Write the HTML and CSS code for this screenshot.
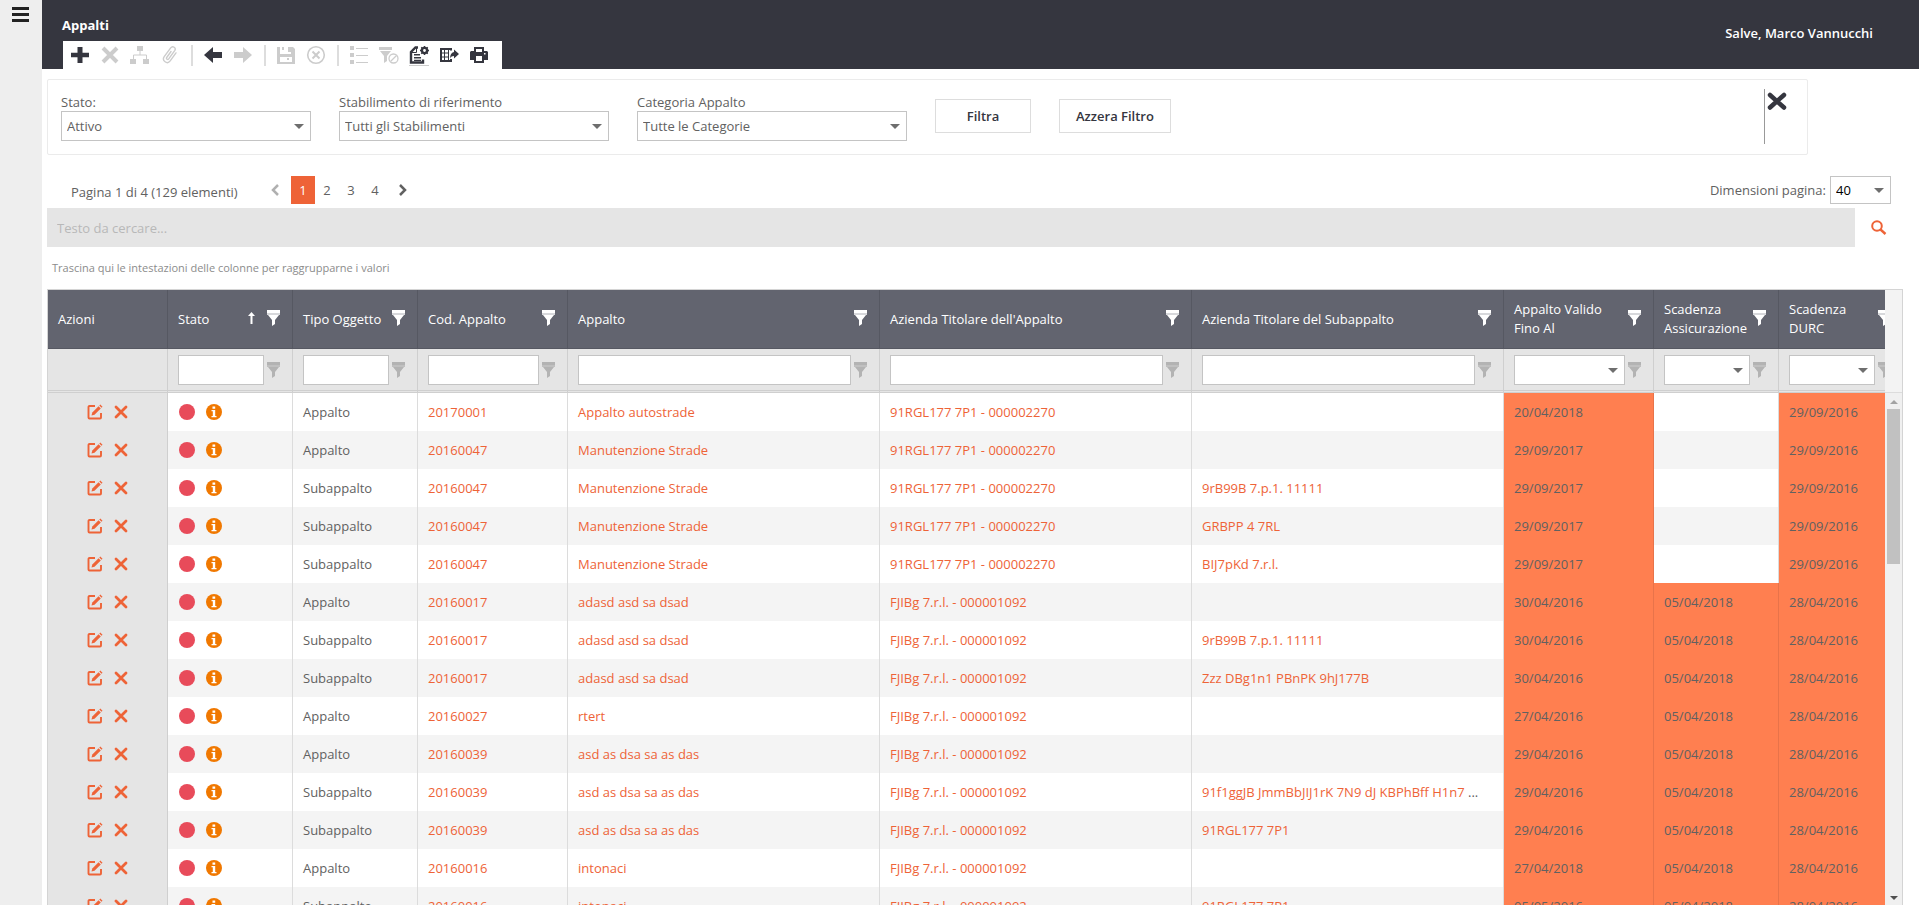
FILE: index.html
```html
<!DOCTYPE html>
<html lang="it">
<head>
    <meta charset="UTF-8">
    <meta name="viewport" content="width=device-width, initial-scale=1.0">
    <title>Appalti</title>
    <link rel="stylesheet" href="styles.css">
</head>
<body>
    <!-- Icon definitions -->
    <svg class="icon-defs" aria-hidden="true">
        <symbol id="funnel" viewBox="0 0 13 16">
            <path d="M0 0h13v3H0z"/>
            <path d="M0 3h13v2H0z" opacity=".75"/>
            <path d="M1 5h11L8 10v4l-3 2v-6z"/>
        </symbol>
        <symbol id="edit" viewBox="0 0 16 16">
            <path d="M8 2H2.500a1 1 0 0 0-1 1v10.500a1 1 0 0 0 1 1H13a1 1 0 0 0 1-1V9" fill="none" stroke="currentColor" stroke-width="1.900"/>
            <path d="M4.500 11.500l.8-3L11.600 2.200l2.200 2.200L7.500 10.700z"/>
            <path d="M12.300 1.500l1-1 2.200 2.200-1 1z"/>
        </symbol>
        <symbol id="cross" viewBox="0 0 14 14">
            <path d="M2 2l10 10M12 2L2 12" fill="none" stroke="currentColor" stroke-width="2.800" stroke-linecap="round"/>
        </symbol>
        <symbol id="info" viewBox="0 0 16 16">
            <circle cx="8" cy="8" r="8"/>
            <path d="M6.500 2.500h2.700v2.200H6.500zM5.500 6h3.700v6h1.300v1.200h-5V12h1.300V7.200H5.500z" fill="#fff"/>
        </symbol>
    </svg>

    <div class="app">
        <aside class="sidebar">
            <button class="menu-button" aria-label="Menu"><svg width="17" height="15" viewBox="0 0 17 15"><path d="M0 0h17v3H0zM0 6h17v3H0zM0 12h17v3H0z"/></svg></button>
        </aside>

        <div class="page">
            <header class="header">
                <div class="header-left">
                    <h1>Appalti</h1>
                    <div class="toolbar">
                        <button class="tool" aria-label="Nuovo"><svg viewBox="0 0 20 20"><path d="M7.500 2h5v5.800H19v4.400h-6.500V18h-5v-5.800H1V7.800h6.500z"/></svg></button>
                        <button class="tool" aria-label="Elimina" disabled><svg viewBox="0 0 20 20"><path d="M3 3l14 14M17 3L3 17" fill="none" stroke="currentColor" stroke-width="4"/></svg></button>
                        <button class="tool" aria-label="Struttura" disabled><svg viewBox="0 0 20 20"><path d="M7 1h6v5H7zM0 14h6v5H0zM13 14h6v5h-6z"/><path d="M10 6v4M3.500 14v-4h13v4" fill="none" stroke="currentColor"/></svg></button>
                        <button class="tool" aria-label="Allegati" disabled><svg viewBox="0 0 20 20"><path d="M11 6.500l-4.300 6c-.9 1.400 1 2.700 2 1.400l6-8.300c1.800-2.700-2-5.400-4-2.700L4.200 11.700c-2.700 4 3 8.200 6 4.200l5.800-8" fill="none" stroke="currentColor" stroke-width="1.400" stroke-linecap="round"/></svg></button>
                        <span class="separator"></span>
                        <button class="tool" aria-label="Indietro"><svg viewBox="0 0 20 20"><path d="M1 10l9-8v5h9v6h-9v5z"/></svg></button>
                        <button class="tool" aria-label="Avanti" disabled><svg viewBox="0 0 20 20"><path d="M19 10l-9-8v5H1v6h9v5z"/></svg></button>
                        <span class="separator"></span>
                        <button class="tool" aria-label="Salva" disabled><svg viewBox="0 0 20 20"><path fill-rule="evenodd" d="M1 2h3v7h11V2h2l2 2v15H1zM4 12v5h12v-5z"/><path d="M6 2h2v3H6zM12 2h3v5h-3zM11 13h2v2h-2z"/></svg></button>
                        <button class="tool" aria-label="Annulla" disabled><svg viewBox="0 0 20 20"><path d="M6.500 6.500l7 7M13.500 6.500l-7 7" fill="none" stroke="currentColor" stroke-width="2"/><circle cx="10" cy="10" r="8.300" fill="none" stroke="currentColor" stroke-width="1.600"/></svg></button>
                        <span class="separator"></span>
                        <button class="tool" aria-label="Elenco" disabled><svg viewBox="0 0 20 20"><path d="M1 1h4v4H1zM1 8h4v4H1zM1 15h4v4H1zM7 3h12v1H7zM7 10h12v1H7zM7 17h12v1H7z"/></svg></button>
                        <button class="tool" aria-label="Rimuovi filtro" disabled><svg viewBox="0 0 20 20"><path d="M0 2h13v3H0zM1 6h11l-4 5v5l-3 2v-7z"/><circle cx="14.500" cy="13.500" r="6" fill="#fff"/><circle cx="14.500" cy="13.500" r="4.500" fill="none" stroke="currentColor" stroke-width="1.300"/><path d="M11.500 16.500l6-6" stroke="currentColor" stroke-width="1.300"/></svg></button>
                        <button class="tool focused" aria-label="Report"><svg viewBox="0 0 20 20"><path d="M9 2.500H6.500L2 7v10.500h12v-3" fill="none" stroke="currentColor" stroke-width="2.400"/><path d="M7.500 2v5.500H2" fill="none" stroke="currentColor"/><path d="M5 9h6v1.500H5zM5 12h7v1.500H5zM5 14.800h7V16H5z"/><circle cx="15.500" cy="5.500" r="2.600" fill="none" stroke="currentColor" stroke-width="2.400"/><path d="M15.500 1v2M15.500 8v2M11 5.500h2M18 5.500h2M12.300 2.300l1.400 1.400M17.300 7.300l1.400 1.400M18.700 2.300l-1.400 1.400M13.700 7.300l-1.400 1.400" stroke="currentColor" stroke-width="1.500"/></svg></button>
                        <button class="tool" aria-label="Esporta"><svg viewBox="0 0 20 20"><path d="M12 5.500V4H2v12h10v-2" fill="none" stroke="currentColor" stroke-width="2"/><path d="M5.500 4v12M9.500 4v12M2 8h8M2 12h8" stroke="currentColor"/><path d="M15 4.500l5 4.500-5 4.500V11c-2 0-3 .7-3.800 2.500-.2-3.500 1-6 3.800-6.500z"/></svg></button>
                        <button class="tool" aria-label="Stampa"><svg viewBox="0 0 20 20"><path fill-rule="evenodd" d="M5 2h10v4h3l1 1v8h-4v3H5v-3H1V7l1-1h3zM7 4v3h6V4zM7 11v5h6v-5zM15 8v1.500h1.500V8z"/></svg></button>
                    </div>
                </div>
                <div class="user">Salve, Marco Vannucchi</div>
            </header>

            <main class="content">
                <form class="filter-panel">
                    <div class="field field-small">
                        <label for="stato">Stato:</label>
                        <div class="select-box"><select id="stato"><option>Attivo</option></select></div>
                    </div>
                    <div class="field">
                        <label for="stabilimento">Stabilimento di riferimento</label>
                        <div class="select-box"><select id="stabilimento"><option>Tutti gli Stabilimenti</option></select></div>
                    </div>
                    <div class="field">
                        <label for="categoria">Categoria Appalto</label>
                        <div class="select-box"><select id="categoria"><option>Tutte le Categorie</option></select></div>
                    </div>
                    <button type="button" class="button">Filtra</button>
                    <button type="button" class="button">Azzera Filtro</button>
                    <div class="panel-close">
                        <button type="button" aria-label="Chiudi"><svg width="20" height="18" viewBox="0 0 20 18"><path d="M3 3l14 12.500M17 3L3 15.500" fill="none" stroke="currentColor" stroke-width="4.500" stroke-linecap="round"/></svg></button>
                    </div>
                </form>

                <div class="pager">
                    <span class="pager-summary">Pagina 1 di 4 (129 elementi)</span>
                    <nav class="pages" aria-label="Pagine">
                        <a class="page-prev" aria-label="Precedente"><svg width="8" height="12" viewBox="0 0 8 12"><path d="M7 1L2 6l5 5" fill="none" stroke="currentColor" stroke-width="2.500"/></svg></a>
                        <a class="current" href="#">1</a>
                        <a href="#">2</a>
                        <a href="#">3</a>
                        <a href="#">4</a>
                        <a class="page-next" href="#" aria-label="Successiva"><svg width="8" height="12" viewBox="0 0 8 12"><path d="M1 1l5 5-5 5" fill="none" stroke="currentColor" stroke-width="2.500"/></svg></a>
                    </nav>
                    <label class="size-label" for="pageSize">Dimensioni pagina:</label>
                    <div class="select-box size-box"><select id="pageSize"><option>40</option></select></div>
                </div>

                <div class="search">
                    <input type="text" placeholder="Testo da cercare..." aria-label="Testo da cercare">
                    <button aria-label="Cerca"><svg width="16" height="15" viewBox="0 0 16 15"><circle cx="6" cy="6" r="4.800" fill="none" stroke="currentColor" stroke-width="2"/><path d="M9.500 9.500l5 4.500" stroke="currentColor" stroke-width="2.400"/></svg></button>
                </div>

                <p class="group-hint">Trascina qui le intestazioni delle colonne per raggrupparne i valori</p>

                <div class="grid">
                    <div class="grid-view">
                        <table>
                            <colgroup>
                                <col class="w-actions"><col class="w-small"><col class="w-small"><col class="w-medium"><col><col><col><col class="w-medium"><col class="w-small"><col class="w-small">
                            </colgroup>
                            <thead>
                                <tr class="titles">
                                    <th>Azioni</th>
                                    <th><div class="head"><span>Stato</span><svg class="sort" width="7" height="12" viewBox="0 0 7 12"><path d="M3.500 0L7 4H4.500v8h-2V4H0z"/></svg><svg class="funnel"><use href="#funnel"/></svg></div></th>
                                    <th><div class="head"><span>Tipo Oggetto</span><svg class="funnel"><use href="#funnel"/></svg></div></th>
                                    <th><div class="head"><span>Cod. Appalto</span><svg class="funnel"><use href="#funnel"/></svg></div></th>
                                    <th><div class="head"><span>Appalto</span><svg class="funnel"><use href="#funnel"/></svg></div></th>
                                    <th><div class="head"><span>Azienda Titolare dell'Appalto</span><svg class="funnel"><use href="#funnel"/></svg></div></th>
                                    <th><div class="head"><span>Azienda Titolare del Subappalto</span><svg class="funnel"><use href="#funnel"/></svg></div></th>
                                    <th><div class="head"><span>Appalto Valido Fino Al</span><svg class="funnel"><use href="#funnel"/></svg></div></th>
                                    <th><div class="head"><span>Scadenza Assicurazione</span><svg class="funnel"><use href="#funnel"/></svg></div></th>
                                    <th><div class="head"><span>Scadenza<br>DURC</span><svg class="funnel"><use href="#funnel"/></svg></div></th>
                                </tr>
                                <tr class="filters">
                                    <td></td>
                                    <td><div class="head"><input type="text" aria-label="Filtra Stato"><svg class="funnel"><use href="#funnel"/></svg></div></td>
                                    <td><div class="head"><input type="text" aria-label="Filtra Tipo Oggetto"><svg class="funnel"><use href="#funnel"/></svg></div></td>
                                    <td><div class="head"><input type="text" aria-label="Filtra Cod. Appalto"><svg class="funnel"><use href="#funnel"/></svg></div></td>
                                    <td><div class="head"><input type="text" aria-label="Filtra Appalto"><svg class="funnel"><use href="#funnel"/></svg></div></td>
                                    <td><div class="head"><input type="text" aria-label="Filtra Azienda Titolare dell'Appalto"><svg class="funnel"><use href="#funnel"/></svg></div></td>
                                    <td><div class="head"><input type="text" aria-label="Filtra Azienda Titolare del Subappalto"><svg class="funnel"><use href="#funnel"/></svg></div></td>
                                    <td><div class="head"><div class="select-box"><select aria-label="Filtra Appalto Valido Fino Al"><option></option></select></div><svg class="funnel"><use href="#funnel"/></svg></div></td>
                                    <td><div class="head"><div class="select-box"><select aria-label="Filtra Scadenza Assicurazione"><option></option></select></div><svg class="funnel"><use href="#funnel"/></svg></div></td>
                                    <td><div class="head"><div class="select-box"><select aria-label="Filtra Scadenza DURC"><option></option></select></div><svg class="funnel"><use href="#funnel"/></svg></div></td>
                                </tr>
                            </thead>
                            <tbody>
                                <tr>
                                    <td class="actions"><button aria-label="Modifica"><svg class="edit"><use href="#edit"/></svg></button><button aria-label="Elimina"><svg class="cross"><use href="#cross"/></svg></button></td>
                                    <td class="status"><i class="dot"></i><svg class="info"><use href="#info"/></svg></td>
                                    <td>Appalto</td>
                                    <td><a href="#">20170001</a></td>
                                    <td><a href="#">Appalto autostrade</a></td>
                                    <td><a href="#">91RGL177 7P1 - 000002270</a></td>
                                    <td></td>
                                    <td class="expired">20/04/2018</td>
                                    <td></td>
                                    <td class="expired">29/09/2016</td>
                                </tr>
                                <tr>
                                    <td class="actions"><button aria-label="Modifica"><svg class="edit"><use href="#edit"/></svg></button><button aria-label="Elimina"><svg class="cross"><use href="#cross"/></svg></button></td>
                                    <td class="status"><i class="dot"></i><svg class="info"><use href="#info"/></svg></td>
                                    <td>Appalto</td>
                                    <td><a href="#">20160047</a></td>
                                    <td><a href="#">Manutenzione Strade</a></td>
                                    <td><a href="#">91RGL177 7P1 - 000002270</a></td>
                                    <td></td>
                                    <td class="expired">29/09/2017</td>
                                    <td></td>
                                    <td class="expired">29/09/2016</td>
                                </tr>
                                <tr>
                                    <td class="actions"><button aria-label="Modifica"><svg class="edit"><use href="#edit"/></svg></button><button aria-label="Elimina"><svg class="cross"><use href="#cross"/></svg></button></td>
                                    <td class="status"><i class="dot"></i><svg class="info"><use href="#info"/></svg></td>
                                    <td>Subappalto</td>
                                    <td><a href="#">20160047</a></td>
                                    <td><a href="#">Manutenzione Strade</a></td>
                                    <td><a href="#">91RGL177 7P1 - 000002270</a></td>
                                    <td><a href="#">9rB99B 7.p.1. 11111</a></td>
                                    <td class="expired">29/09/2017</td>
                                    <td></td>
                                    <td class="expired">29/09/2016</td>
                                </tr>
                                <tr>
                                    <td class="actions"><button aria-label="Modifica"><svg class="edit"><use href="#edit"/></svg></button><button aria-label="Elimina"><svg class="cross"><use href="#cross"/></svg></button></td>
                                    <td class="status"><i class="dot"></i><svg class="info"><use href="#info"/></svg></td>
                                    <td>Subappalto</td>
                                    <td><a href="#">20160047</a></td>
                                    <td><a href="#">Manutenzione Strade</a></td>
                                    <td><a href="#">91RGL177 7P1 - 000002270</a></td>
                                    <td><a href="#">GRBPP 4 7RL</a></td>
                                    <td class="expired">29/09/2017</td>
                                    <td></td>
                                    <td class="expired">29/09/2016</td>
                                </tr>
                                <tr>
                                    <td class="actions"><button aria-label="Modifica"><svg class="edit"><use href="#edit"/></svg></button><button aria-label="Elimina"><svg class="cross"><use href="#cross"/></svg></button></td>
                                    <td class="status"><i class="dot"></i><svg class="info"><use href="#info"/></svg></td>
                                    <td>Subappalto</td>
                                    <td><a href="#">20160047</a></td>
                                    <td><a href="#">Manutenzione Strade</a></td>
                                    <td><a href="#">91RGL177 7P1 - 000002270</a></td>
                                    <td><a href="#">BIJ7pKd 7.r.l.</a></td>
                                    <td class="expired">29/09/2017</td>
                                    <td></td>
                                    <td class="expired">29/09/2016</td>
                                </tr>
                                <tr>
                                    <td class="actions"><button aria-label="Modifica"><svg class="edit"><use href="#edit"/></svg></button><button aria-label="Elimina"><svg class="cross"><use href="#cross"/></svg></button></td>
                                    <td class="status"><i class="dot"></i><svg class="info"><use href="#info"/></svg></td>
                                    <td>Appalto</td>
                                    <td><a href="#">20160017</a></td>
                                    <td><a href="#">adasd asd sa dsad</a></td>
                                    <td><a href="#">FJIBg 7.r.l. - 000001092</a></td>
                                    <td></td>
                                    <td class="expired">30/04/2016</td>
                                    <td class="expired">05/04/2018</td>
                                    <td class="expired">28/04/2016</td>
                                </tr>
                                <tr>
                                    <td class="actions"><button aria-label="Modifica"><svg class="edit"><use href="#edit"/></svg></button><button aria-label="Elimina"><svg class="cross"><use href="#cross"/></svg></button></td>
                                    <td class="status"><i class="dot"></i><svg class="info"><use href="#info"/></svg></td>
                                    <td>Subappalto</td>
                                    <td><a href="#">20160017</a></td>
                                    <td><a href="#">adasd asd sa dsad</a></td>
                                    <td><a href="#">FJIBg 7.r.l. - 000001092</a></td>
                                    <td><a href="#">9rB99B 7.p.1. 11111</a></td>
                                    <td class="expired">30/04/2016</td>
                                    <td class="expired">05/04/2018</td>
                                    <td class="expired">28/04/2016</td>
                                </tr>
                                <tr>
                                    <td class="actions"><button aria-label="Modifica"><svg class="edit"><use href="#edit"/></svg></button><button aria-label="Elimina"><svg class="cross"><use href="#cross"/></svg></button></td>
                                    <td class="status"><i class="dot"></i><svg class="info"><use href="#info"/></svg></td>
                                    <td>Subappalto</td>
                                    <td><a href="#">20160017</a></td>
                                    <td><a href="#">adasd asd sa dsad</a></td>
                                    <td><a href="#">FJIBg 7.r.l. - 000001092</a></td>
                                    <td><a href="#">Zzz DBg1n1 PBnPK 9hJ177B</a></td>
                                    <td class="expired">30/04/2016</td>
                                    <td class="expired">05/04/2018</td>
                                    <td class="expired">28/04/2016</td>
                                </tr>
                                <tr>
                                    <td class="actions"><button aria-label="Modifica"><svg class="edit"><use href="#edit"/></svg></button><button aria-label="Elimina"><svg class="cross"><use href="#cross"/></svg></button></td>
                                    <td class="status"><i class="dot"></i><svg class="info"><use href="#info"/></svg></td>
                                    <td>Appalto</td>
                                    <td><a href="#">20160027</a></td>
                                    <td><a href="#">rtert</a></td>
                                    <td><a href="#">FJIBg 7.r.l. - 000001092</a></td>
                                    <td></td>
                                    <td class="expired">27/04/2016</td>
                                    <td class="expired">05/04/2018</td>
                                    <td class="expired">28/04/2016</td>
                                </tr>
                                <tr>
                                    <td class="actions"><button aria-label="Modifica"><svg class="edit"><use href="#edit"/></svg></button><button aria-label="Elimina"><svg class="cross"><use href="#cross"/></svg></button></td>
                                    <td class="status"><i class="dot"></i><svg class="info"><use href="#info"/></svg></td>
                                    <td>Appalto</td>
                                    <td><a href="#">20160039</a></td>
                                    <td><a href="#">asd as dsa sa as das</a></td>
                                    <td><a href="#">FJIBg 7.r.l. - 000001092</a></td>
                                    <td></td>
                                    <td class="expired">29/04/2016</td>
                                    <td class="expired">05/04/2018</td>
                                    <td class="expired">28/04/2016</td>
                                </tr>
                                <tr>
                                    <td class="actions"><button aria-label="Modifica"><svg class="edit"><use href="#edit"/></svg></button><button aria-label="Elimina"><svg class="cross"><use href="#cross"/></svg></button></td>
                                    <td class="status"><i class="dot"></i><svg class="info"><use href="#info"/></svg></td>
                                    <td>Subappalto</td>
                                    <td><a href="#">20160039</a></td>
                                    <td><a href="#">asd as dsa sa as das</a></td>
                                    <td><a href="#">FJIBg 7.r.l. - 000001092</a></td>
                                    <td><a href="#">91f1ggJB JmmBbJIJ1rK 7N9 dJ KBPhBff H1n7</a> ...</td>
                                    <td class="expired">29/04/2016</td>
                                    <td class="expired">05/04/2018</td>
                                    <td class="expired">28/04/2016</td>
                                </tr>
                                <tr>
                                    <td class="actions"><button aria-label="Modifica"><svg class="edit"><use href="#edit"/></svg></button><button aria-label="Elimina"><svg class="cross"><use href="#cross"/></svg></button></td>
                                    <td class="status"><i class="dot"></i><svg class="info"><use href="#info"/></svg></td>
                                    <td>Subappalto</td>
                                    <td><a href="#">20160039</a></td>
                                    <td><a href="#">asd as dsa sa as das</a></td>
                                    <td><a href="#">FJIBg 7.r.l. - 000001092</a></td>
                                    <td><a href="#">91RGL177 7P1</a></td>
                                    <td class="expired">29/04/2016</td>
                                    <td class="expired">05/04/2018</td>
                                    <td class="expired">28/04/2016</td>
                                </tr>
                                <tr>
                                    <td class="actions"><button aria-label="Modifica"><svg class="edit"><use href="#edit"/></svg></button><button aria-label="Elimina"><svg class="cross"><use href="#cross"/></svg></button></td>
                                    <td class="status"><i class="dot"></i><svg class="info"><use href="#info"/></svg></td>
                                    <td>Appalto</td>
                                    <td><a href="#">20160016</a></td>
                                    <td><a href="#">intonaci</a></td>
                                    <td><a href="#">FJIBg 7.r.l. - 000001092</a></td>
                                    <td></td>
                                    <td class="expired">27/04/2018</td>
                                    <td class="expired">05/04/2018</td>
                                    <td class="expired">28/04/2016</td>
                                </tr>
                                <tr>
                                    <td class="actions"><button aria-label="Modifica"><svg class="edit"><use href="#edit"/></svg></button><button aria-label="Elimina"><svg class="cross"><use href="#cross"/></svg></button></td>
                                    <td class="status"><i class="dot"></i><svg class="info"><use href="#info"/></svg></td>
                                    <td>Subappalto</td>
                                    <td><a href="#">20160016</a></td>
                                    <td><a href="#">intonaci</a></td>
                                    <td><a href="#">FJIBg 7.r.l. - 000001092</a></td>
                                    <td><a href="#">91RGL177 7P1</a></td>
                                    <td class="expired">05/05/2016</td>
                                    <td class="expired">05/04/2018</td>
                                    <td class="expired">28/04/2016</td>
                                </tr>
                            </tbody>
                        </table>
                    </div>
                    <div class="scrollbar" aria-hidden="true">
                        <div class="scroll-head"></div>
                        <div class="scroll-track">
                            <span class="arrow-up"></span>
                            <span class="thumb"></span>
                            <span class="arrow-down"></span>
                        </div>
                    </div>
                </div>
            </main>
        </div>
    </div>
</body>
</html>
```

FILE: styles.css
```css
* {
    box-sizing: border-box;
}

body {
    margin: 0;
    font-family: 'Segoe UI', 'Open Sans', sans-serif;
    font-size: 13px;
    line-height: 18px;
    color: #616161;
    background: #fff;
}

button, input, select {
    font: inherit;
    color: inherit;
    margin: 0;
}

button {
    padding: 0;
    border: none;
    background: none;
    cursor: pointer;
}

svg {
    display: block;
    fill: currentColor;
}

a {
    color: #ee6337;
    text-decoration: none;
}

.icon-defs {
    display: none;
}

.app {
    display: flex;
    height: 100vh;
    overflow: hidden;
}

.sidebar {
    flex: 0 0 42px;
    padding: 7px 0 0 12px;
    background: #eee;
}

.menu-button {
    color: #222;
}

.page {
    flex: 1;
    min-width: 0;
    display: flex;
    flex-direction: column;
}

/* Header */
.header {
    display: flex;
    justify-content: space-between;
    padding: 15px 46px 0 20px;
    background: #35363f;
    color: #fff;
}

h1 {
    margin: 0 0 6px;
    font-size: 13px;
    line-height: 20px;
}

.user {
    padding-top: 9px;
    font-weight: 600;
}

.toolbar {
    display: flex;
    align-items: center;
    height: 28px;
    margin-left: 1px;
    padding: 0 8px 0 2px;
    background: #fff;
}

.tool {
    width: 30px;
    padding: 0 5px;
    color: #35363f;
}

.tool:disabled {
    color: #ccc;
}

.tool svg {
    width: 20px;
    height: 20px;
}

.tool.focused svg {
    box-shadow: 0 1px #ccc;
}

.separator {
    width: 2px;
    height: 21px;
    margin: 0 5px 0 6px;
    background: #ddd;
}

/* Filter panel */
.content {
    flex: 1;
    min-height: 0;
    display: flex;
    flex-direction: column;
    padding: 10px 16px 0 5px;
}

.filter-panel {
    display: flex;
    align-items: flex-start;
    gap: 28px;
    margin-right: 95px;
    padding: 9px 0 10px 13px;
    border: 1px solid #ebebeb;
    border-radius: 2px;
}

.field {
    width: 270px;
    padding-top: 4px;
}

.field-small {
    width: 250px;
}

.field label {
    display: block;
}

.select-box {
    position: relative;
}

.select-box::after {
    content: '';
    position: absolute;
    top: 50%;
    right: 7px;
    margin-top: -2px;
    border: 5px solid transparent;
    border-top-color: #6e6e6e;
    border-bottom: none;
    pointer-events: none;
}

select {
    appearance: none;
    display: block;
    width: 100%;
    height: 30px;
    padding: 0 5px;
    border: 1px solid #c4c4c4;
    border-radius: 0;
    background: #fff;
}

.button {
    height: 34px;
    min-width: 96px;
    margin-top: 10px;
    padding: 0 16px;
    border: 1px solid #ddd;
    font-weight: 600;
    color: #35363f;
}

.panel-close {
    width: 43px;
    height: 55px;
    margin-left: auto;
    padding: 3px 0 0 2px;
    border-left: 1px solid #999;
    color: #35363f;
}

/* Pager */
.pager {
    display: flex;
    align-items: center;
    margin-top: 21px;
    padding: 0 12px 0 24px;
}

.pager-summary {
    width: 192px;
    padding-top: 4px;
}

.pages {
    display: flex;
}

.pages a {
    display: flex;
    align-items: center;
    justify-content: center;
    width: 24px;
    height: 28px;
    color: #616161;
}

.pages .current {
    background: #ee6337;
    color: #fff;
}

.pages .page-prev {
    margin-right: 4px;
    color: #b0b0b0;
}

.pages .page-next {
    margin-left: 4px;
}

.size-label {
    margin: 0 4px 0 auto;
}

.size-box {
    width: 61px;
    color: #000;
}

.size-box select {
    height: 28px;
}

/* Search */
.search {
    display: flex;
    margin-top: 4px;
}

.search input {
    flex: 1;
    height: 39px;
    padding: 0 10px;
    border: none;
    background: #e5e5e5;
}

.search input::placeholder {
    color: #b8b8b8;
}

.search button {
    width: 48px;
    padding: 0 16px;
    color: #ee6337;
}

.group-hint {
    margin: 0;
    padding: 12px 5px;
    font-size: 11px;
    color: #8c8c8c;
}

/* Grid */
.grid {
    flex: 1;
    min-height: 0;
    display: flex;
    border: 1px solid #d4d4d4;
    border-bottom: none;
}

.grid-view {
    flex: 1;
    min-width: 0;
    overflow: hidden;
}

/* the last column runs under the scrollbar */
table {
    width: calc(100% + 19px);
    table-layout: fixed;
    border-collapse: separate;
    border-spacing: 0;
}

.w-actions {
    width: 120px;
}

.w-small {
    width: 125px;
}

.w-medium {
    width: 150px;
}

th, td {
    padding: 0 12px 0 10px;
    border-right: 1px solid #dcdcdc;
    text-align: left;
    white-space: nowrap;
    overflow: hidden;
    text-overflow: ellipsis;
}

th {
    height: 59px;
    background: #62646f;
    border-right-color: #565862;
    border-bottom: 1px solid #565862;
    color: #fff;
    font-weight: normal;
    line-height: 19px;
    white-space: normal;
}

.head {
    display: flex;
    align-items: center;
    gap: 3px;
}

.head span, .head input, .head .select-box {
    flex: 1;
    min-width: 0;
}

.head input {
    height: 30px;
    padding: 0 6px;
    border: 1px solid #c4c4c4;
    background: #fff;
}

.funnel {
    width: 13px;
    height: 16px;
}

.titles .funnel, .titles .sort {
    margin-bottom: 3px;
}

.sort {
    margin-right: 9px;
}

.filters td {
    height: 44px;
    background: #e5e5e5;
    border-right-color: #cfcfcf;
    border-bottom: 3px double #cfcfcf;
}

.filters .funnel {
    color: #b3b3b3;
}

tbody td {
    height: 38px;
}

tbody tr:nth-child(even) {
    background: #f4f4f4;
}

tbody .actions {
    padding: 0 0 2px 31px;
    background: #e5e5e5;
    border-right-color: #cfcfcf;
    color: #ee6337;
}

.actions button {
    margin: 0 8px;
    vertical-align: middle;
}

.actions button + button {
    margin-left: 3px;
}

.edit {
    width: 16px;
    height: 16px;
}

.cross {
    width: 14px;
    height: 14px;
}

tbody .status {
    padding-bottom: 2px;
}

.status .dot, .status .info {
    display: inline-block;
    width: 16px;
    height: 16px;
    vertical-align: middle;
}

.status .dot {
    margin: 0 11px 0 1px;
    border-radius: 50%;
    background: #e84b5a;
}

.status .info {
    color: #f07800;
}

tbody .expired {
    background: #ff7f50;
    border-right-color: #e8734a;
}

/* Scrollbar */
.scrollbar {
    flex: 0 0 17px;
    display: flex;
    flex-direction: column;
    background: #f0f0f0;
}

.scroll-head {
    height: 103px;
    background: #f3f3f3;
    border-bottom: 1px solid #dcdcdc;
}

.scroll-track {
    flex: 1;
    display: flex;
    flex-direction: column;
    align-items: center;
    padding: 7px 0 5px;
}

.thumb {
    width: 13px;
    height: 31%;
    margin: 5px 0 auto;
    background: #c1c1c1;
}

.arrow-up {
    border: 4px solid transparent;
    border-top: none;
    border-bottom-color: #a3a3a3;
}

.arrow-down {
    border: 4px solid transparent;
    border-bottom: none;
    border-top-color: #505050;
}
```
